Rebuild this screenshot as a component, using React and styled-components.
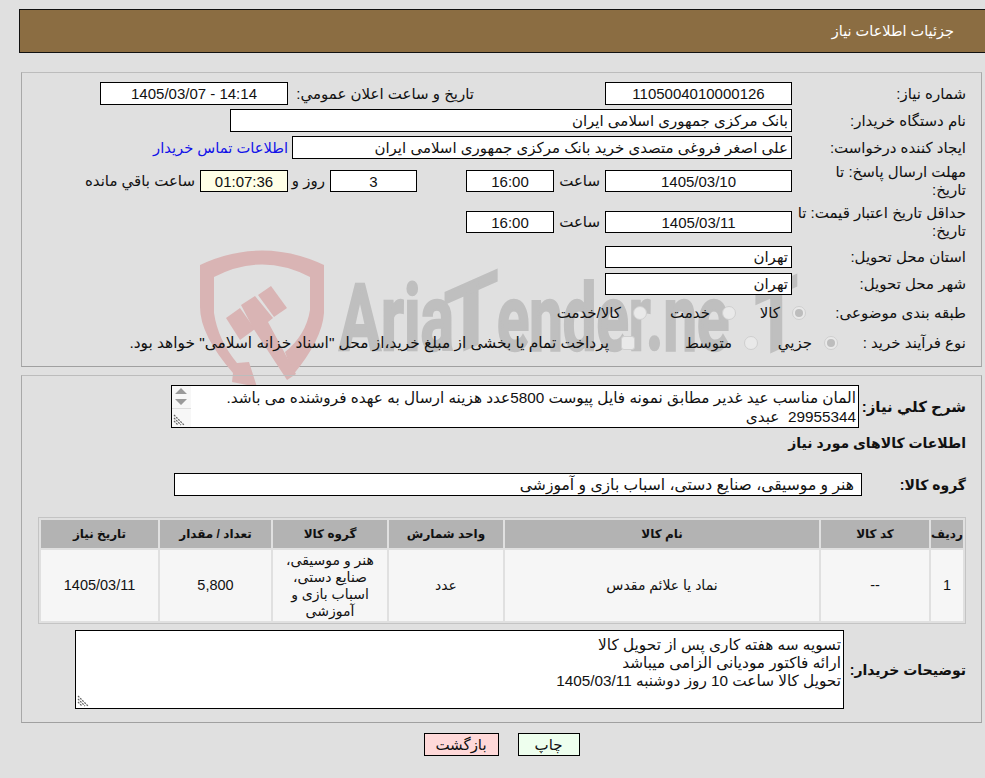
import React from "react";
import styled, { createGlobalStyle } from "styled-components";

const FONT = `"Liberation Sans", "DejaVu Sans", sans-serif`;

const GlobalStyle = createGlobalStyle`
  html, body {
    margin: 0;
    padding: 0;
    background: #e0e0e0;
    overflow: hidden;
  }
  body {
    font-family: ${FONT};
    font-size: 15px;
    color: #111;
  }
`;

const Page = styled.div`
  width: 985px;
  height: 778px;
  padding-top: 9px;
  box-sizing: border-box;
`;

const Header = styled.div`
  height: 44px;
  margin-left: 19px;
  box-sizing: border-box;
  background: #8b6d42;
  border: 1px solid #111;
  border-right: none;
  color: #fff;
  direction: rtl;
  display: flex;
  align-items: center;
  padding-right: 31px;
  font-size: 14.5px;
`;

const Panel = styled.div`
  position: relative;
  width: 961px;
  margin-left: 21px;
  margin-top: ${(p) => p.$top}px;
  height: ${(p) => p.$h}px;
  box-sizing: border-box;
  border: 1px solid #a8a8a8;
  border-top-color: #bcbcbc;
  border-bottom-color: #a0a0a0;
  padding: ${(p) => p.$pad}px 15px 0 0;
  direction: rtl;
`;

const Form = styled.div`
  position: relative;
  display: flex;
  flex-direction: column;
  gap: 4px;
`;

const Row = styled.div`
  display: flex;
  align-items: center;
  height: ${(p) => p.$h}px;
  margin-top: ${(p) => p.$mt || 0}px;
`;

const Label = styled.div`
  width: ${(p) => p.$w || 174}px;
  flex: none;
  line-height: 18px;
  box-sizing: border-box;
  font-weight: ${(p) => (p.$bold ? 700 : 400)};
  font-size: ${(p) => (p.$bold ? p.$size || 14 : 15)}px;
  white-space: ${(p) => (p.$bold ? "nowrap" : "normal")};
`;

const Field = styled.div`
  flex: none;
  width: ${(p) => p.$w}px;
  height: ${(p) => p.$h || 22}px;
  margin-right: ${(p) => p.$mr || 0}px;
  box-sizing: border-box;
  border: 1px solid #000;
  background: ${(p) => p.$bg || "#fff"};
  display: flex;
  align-items: center;
  justify-content: ${(p) => (p.$start ? "flex-start" : "center")};
  padding: 0 ${(p) => p.$pad || 3}px;
  font-size: ${(p) => p.$size || 15}px;
  white-space: nowrap;
  overflow: hidden;
`;

const Text = styled.span`
  flex: none;
  width: ${(p) => (p.$w ? `${p.$w}px` : "auto")};
  margin-right: ${(p) => p.$mr || 0}px;
  white-space: nowrap;
`;

const ContactLink = styled.a`
  margin-right: 4px;
  color: #1212e8;
  text-decoration: none;
  white-space: nowrap;
  font-size: 14.7px;
`;

const Option = styled.div`
  flex: none;
  width: ${(p) => p.$w}px;
  display: flex;
  align-items: center;
  gap: 12px;
  white-space: nowrap;
  font-size: ${(p) => p.$size || 15}px;
`;

const Radio = styled.span`
  flex: none;
  width: 14px;
  height: 14px;
  box-sizing: border-box;
  border-radius: ${(p) => (p.$square ? "3px" : "50%")};
  border: 1px solid #cfcfcf;
  background: #e9e9e9;
  display: flex;
  align-items: center;
  justify-content: center;
  &::after {
    content: "";
    display: ${(p) => (p.$on ? "block" : "none")};
    width: 8px;
    height: 8px;
    border-radius: 50%;
    background: #bdbdbd;
  }
`;

const Watermark = styled.svg`
  position: absolute;
  left: 178px;
  top: 177px;
  direction: ltr;
  pointer-events: none;
`;

const NoteBox = styled.div`
  position: relative;
  flex: none;
  width: ${(p) => p.$w}px;
  height: ${(p) => p.$h}px;
  box-sizing: border-box;
  border: 1px solid #000;
  background: #fff;
  padding: ${(p) => p.$pt || 1}px 2px 0;
  line-height: ${(p) => p.$lh || 18}px;
  font-size: 15.3px;
  white-space: pre-wrap;
`;

const Arrows = styled.div`
  position: absolute;
  left: 0;
  top: 0;
  width: 19px;
  height: 41px;
  background: #f7f7f7;
  &::after {
    content: "";
    position: absolute;
    left: 0;
    right: 0;
    top: 22px;
    border-top: 1px solid #ddd;
  }
`;

const Grip = styled.svg`
  position: absolute;
  left: 1px;
  bottom: 1px;
`;

const GoodsTable = styled.table`
  width: 928px;
  margin: ${(p) => p.$mt}px 0 0 0;
  table-layout: fixed;
  border-collapse: separate;
  border-spacing: 2px;
  border: 1px solid #c4c4c4;
`;

const Th = styled.th`
  width: ${(p) => p.$w}px;
  height: 28px;
  padding: 0;
  background: #b3b3b3;
  font-size: 12px;
  font-weight: 700;
  white-space: nowrap;
`;

const Td = styled.td`
  height: 71px;
  padding: 0 8px;
  background: #f6f6f6;
  text-align: center;
  line-height: 17px;
  font-size: ${(p) => (p.$num ? 14.5 : 14)}px;
`;

const Actions = styled.div`
  display: flex;
  justify-content: center;
  direction: rtl;
  gap: 19px;
  width: 961px;
  margin: 10px 0 0 21px;
`;

const Button = styled.button`
  width: ${(p) => p.$w}px;
  height: 23px;
  padding: 0;
  border: 1px solid #000;
  background: ${(p) => p.$bg};
  font-family: ${FONT};
  font-size: 15px;
  color: #111;
`;

const columns = [
  ["ردیف", 32],
  ["کد کالا", 108],
  ["نام کالا", 314],
  ["واحد شمارش", 114],
  ["گروه کالا", 114],
  ["تعداد / مقدار", 111],
  ["تاریخ نیاز", 117],
];

const ResizeGrip = () => (
  <Grip width="12" height="12" viewBox="0 0 12 12">
    <path d="M1 4 L8 11 M1 7 L5 11 M1 1 L11 11" stroke="#666" strokeWidth="1.2" strokeDasharray="2 1" />
  </Grip>
);

const App = () => {
  return (
    <Page>
      <GlobalStyle />
      <Header>جزئیات اطلاعات نیاز</Header>

      <Panel $top={19} $h={295} $pad={9}>
        <Watermark width="600" height="140" viewBox="200 250 600 140">
          <g fill="#d9b4b4">
            <path d="M200 265 Q262 236 324 265 L324 313 Q322 340 293 375 L285 352 Q306 335 310 310 L310 277 Q262 252 214 277 L214 313 Q218 340 237 363 L249 362 L257 387 L232 382 L233 373 Q200 335 200 307 Z" />
            <path d="M226 318 L240 308 L255 329 L240 340 Z" />
            <path d="M241 305 L255 296 L273 318 L268 322 L296 374 L287 380 L253 328 Z" />
            <path d="M258 295 L271 286 L287 308 L274 317 Z" />
          </g>
          <g fill="#bfbfbf" stroke="#bfbfbf" strokeWidth="2.5" fontFamily="Roboto, sans-serif" fontWeight="700" fontSize="92">
            <text transform="translate(339 350) scale(0.68 1)">Aria</text>
            <text transform="translate(444 350) skewY(-24) scale(0.95 1)" y="9">T</text>
            <text transform="translate(497 350) scale(0.65 1)">ender.ne</text>
            <text transform="translate(755 350) skewY(-24) scale(0.75 1)" y="9">T</text>
          </g>
        </Watermark>
        <Form>
          <Row $h={23}>
            <Label>شماره نیاز:</Label>
            <Field $w={187} $h={23}>1105004010000126</Field>
            <Text $mr={131} $w={186}>تاریخ و ساعت اعلان عمومي:</Text>
            <Field $w={188} $h={23}>14:14 - 1405/03/07</Field>
          </Row>
          <Row $h={23}>
            <Label>نام دستگاه خریدار:</Label>
            <Field $w={562} $h={23} $start>بانک مرکزی جمهوری اسلامی ایران</Field>
          </Row>
          <Row $h={23}>
            <Label>ایجاد کننده درخواست:</Label>
            <Field $w={500} $h={23} $start>علی اصغر فروغی متصدی خرید بانک مرکزی جمهوری اسلامی ایران</Field>
            <ContactLink href="#">اطلاعات تماس خریدار</ContactLink>
          </Row>
          <Row $h={36}>
            <Label>مهلت ارسال پاسخ: تا<br />تاریخ:</Label>
            <Field $w={187}>1405/03/10</Field>
            <Text $mr={5} $w={46}>ساعت</Text>
            <Field $w={88}>16:00</Field>
            <Field $w={87} $mr={49}>3</Field>
            <Text $mr={5} $w={37}>روز و</Text>
            <Field $w={88} $bg="#ffffe6">01:07:36</Field>
            <Text $mr={5}>ساعت باقي مانده</Text>
          </Row>
          <Row $h={38}>
            <Label>حداقل تاریخ اعتبار قیمت: تا<br />تاریخ:</Label>
            <Field $w={187}>1405/03/11</Field>
            <Text $mr={5} $w={46}>ساعت</Text>
            <Field $w={88}>16:00</Field>
          </Row>
          <Row $h={23}>
            <Label>استان محل تحویل:</Label>
            <Field $w={187} $start>تهران</Field>
          </Row>
          <Row $h={23}>
            <Label>شهر محل تحویل:</Label>
            <Field $w={187} $start>تهران</Field>
          </Row>
          <Row $h={28}>
            <Label $w={160}>طبقه بندی موضوعی:</Label>
            <Option $w={70}><Radio $on />کالا</Option>
            <Option $w={89}><Radio />خدمت</Option>
            <Option $w={100}><Radio />کالا/خدمت</Option>
          </Row>
          <Row $h={24}>
            <Label $w={128}>نوع فرآیند خرید :</Label>
            <Option $w={80}><Radio $on />جزیي</Option>
            <Option $w={123}><Radio />متوسط</Option>
            <Option $w={490} $size={15.4}><Radio $square />پرداخت تمام یا بخشی از مبلغ خرید،از محل "اسناد خزانه اسلامی" خواهد بود.</Option>
          </Row>
        </Form>
      </Panel>

      <Panel $top={8} $h={348} $pad={9}>
        <Row $h={43}>
          <Label $w={107} $bold $size={15}>شرح كلي نياز:</Label>
          <NoteBox $w={688} $h={43} $lh={19} $pt={2}>
            {"المان مناسب عید غدیر مطابق نمونه فایل پیوست 5800عدد هزینه ارسال به عهده فروشنده می باشد.\n29955344  عبدی"}
            <Arrows>
              <svg width="19" height="22" viewBox="0 0 19 22">
                <path d="M9 2 L15 8 L3 8 Z M3 13 L15 13 L9 19 Z" fill="#9a9a9a" />
              </svg>
            </Arrows>
            <ResizeGrip />
          </NoteBox>
        </Row>
        <Row $h={18} $mt={6}>
          <Label $w={300} $bold>اطلاعات کالاهای مورد نیاز</Label>
        </Row>
        <Row $h={23} $mt={21}>
          <Label $w={104} $bold>گروه کالا:</Label>
          <Field $w={688} $h={23} $pad={7} $size={15.6} $start>هنر و موسیقی، صنایع دستی، اسباب بازی و آموزشی</Field>
        </Row>
        <GoodsTable $mt={21}>
          <thead>
            <tr>
              {columns.map(([title, width]) => (
                <Th key={title} $w={width}>{title}</Th>
              ))}
            </tr>
          </thead>
          <tbody>
            <tr>
              <Td $num>1</Td>
              <Td $num>--</Td>
              <Td>نماد یا علائم مقدس</Td>
              <Td>عدد</Td>
              <Td>هنر و موسیقی، صنایع دستی، اسباب بازی و آموزشی</Td>
              <Td $num>5,800</Td>
              <Td $num>1405/03/11</Td>
            </tr>
          </tbody>
        </GoodsTable>
        <Row $h={79} $mt={6}>
          <Label $w={122} $bold>توضیحات خریدار:</Label>
          <NoteBox $w={769} $h={79} $pt={5}>
            {"تسویه سه هفته کاری پس از تحویل کالا\nارائه فاکتور مودیانی الزامی میباشد\nتحویل کالا ساعت 10 روز دوشنبه 1405/03/11"}
            <ResizeGrip />
          </NoteBox>
        </Row>
      </Panel>

      <Actions>
        <Button $w={62} $bg="#eeffee">چاپ</Button>
        <Button $w={75} $bg="#ffd9d9">بازگشت</Button>
      </Actions>
    </Page>
  );
};

export default App;
